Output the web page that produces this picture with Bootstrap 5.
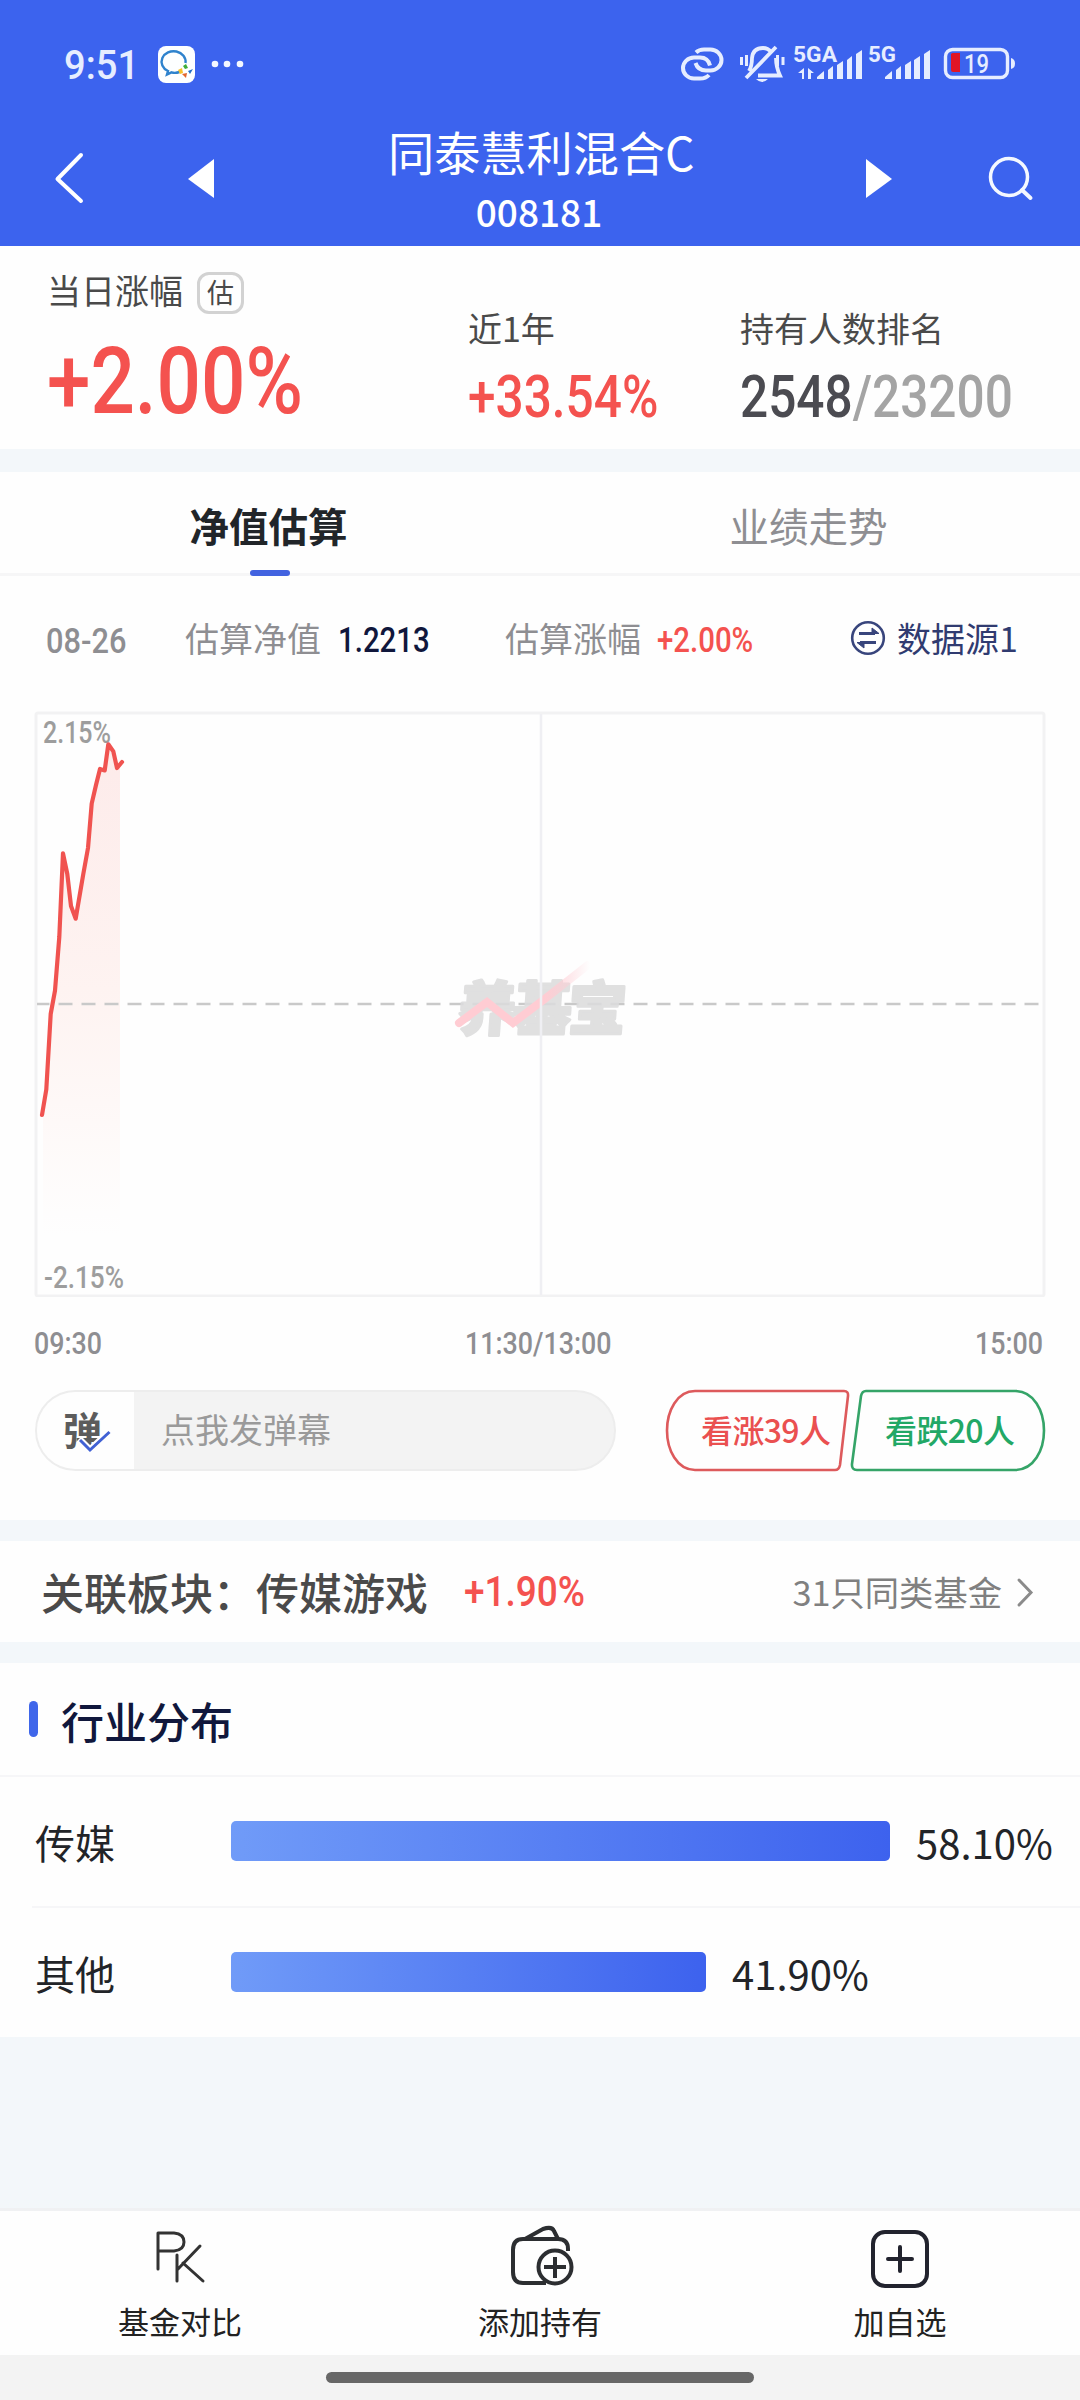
<!DOCTYPE html>
<html lang="zh-CN">
<head>
<meta charset="utf-8">
<meta name="viewport" content="width=device-width, initial-scale=1">
<title>同泰慧利混合C 008181</title>
<link href="https://cdn.jsdelivr.net/npm/bootstrap@5.3.0/dist/css/bootstrap.min.css" rel="stylesheet">
<style>
  body{width:1080px;height:2400px;overflow:hidden;background:#f3f7fa;font-family:"Noto Sans CJK SC",sans-serif;font-size:34px;line-height:50px;color:#4a4a4a;white-space:nowrap}
  svg{display:block;flex:none}
  .panel{background:#fefefe}
  .num{display:inline-block;font-family:Roboto,"Noto Sans CJK SC",sans-serif;font-weight:500;transform:scaleX(.84);transform-origin:0 50%;text-align:left}
  .up{color:#f4524f}
  .muted{color:#8e8e92}
  .app-head{height:246px;background:#3c63ee;color:#fff}
  .status{height:96px;padding:30px 0 0 64px}
  .clock{width:94px;font-size:41px;line-height:62px;color:#e6edff}
  .clock .num{transform:scaleX(.93)}
  .head-bar{height:150px;padding-left:52px}
  .fund-title{font-size:46.2px;line-height:56px;padding-top:27px}
  .fund-code{font-size:37px;line-height:37px;font-weight:500;padding-top:14px}
  .summary{height:203px}
  .sum-day{width:468px;padding:19px 0 0 47px}
  .sum-year{width:273px;padding-top:57px}
  .sum-rank{padding-top:57px;margin-left:-1px}
  .tag-est{width:47px;height:42px;border:3px solid #d2d2d2;border-radius:12px;font-size:27px;line-height:33px;margin:7px 0 0 14px}
  .num-xl{font-size:92px;line-height:100px;margin-top:17px;transform:scaleX(.85)}
  .num-lg{font-size:59px;line-height:64px;margin-top:12px}
  .tabs{height:104px;margin-top:23px;border-bottom:3px solid #f6f6f7;font-size:39.5px}
  .tab-item{width:540px;padding-top:26px;line-height:54px}
  .tab-item span{margin-left:-3px}
  .tab-item i{flex:none;width:40px;height:6px;border-radius:3px;background:#4263e0;margin-top:18px}
  .dark{color:#10173c}
  .info{height:135px;padding:37px 0 0 46px}
  .info .num{font-size:35px}
  .axis{height:93px;padding-top:16px;font-size:31px;line-height:56px}
  .axis .num{transform:scaleX(.865)}
  .danmu{width:581px;height:81px;border-radius:41px;border:2px solid #ededed;background:#f3f3f3;overflow:hidden;color:#9a9a9a}
  .danmu-sw{width:97px;height:77px;background:#fefefe;padding-left:27px}
  .vote text{font-family:"Noto Sans CJK SC",sans-serif;font-size:32px;font-weight:500}
  .related{height:101px;margin-top:21px;padding:22px 0 0 41px;font-size:43px;font-weight:500;line-height:56px}
  .dist{height:374px;margin-top:21px}
  .dist-head{height:114px;padding:30px 0 0 29px;border-bottom:2px solid #f6f6f8;font-size:43px;font-weight:500;line-height:54px}
  .dist-head i{width:9px;height:36px;border-radius:5px;background:#3f66ea;margin:8px 23px 0 0}
  .dist-row{height:130px;padding-left:35px;font-size:40px;color:#222428}
  .dist-row .name{flex:none;width:196px;line-height:56px;padding-top:37px}
  .dist-row .pct{line-height:56px;padding-top:37px}
  .bar{flex:none;height:40px;border-radius:5px;background:linear-gradient(90deg,#709bf8,#3d62ee);margin:44px 26px 0 0}
  .foot{height:147px;margin-top:171px;border-top:3px solid #f0f1f3}
  .foot .col{font-size:31px;line-height:44px;color:#222}
  .foot svg{margin:11px auto 1px}
  .home{height:45px;background:#f3f3f3;padding-top:17px}
  .home i{width:428px;height:11px;border-radius:6px;background:#676767}
</style>
<script src="https://cdn.jsdelivr.net/npm/bootstrap@5.3.0/dist/js/bootstrap.bundle.min.js"></script>
</head>
<body>
<header class="app-head">
  <div class="status d-flex">
    <span class="clock"><span class="num">9:51</span></span>
    <svg width="90" height="66" viewBox="158 30 90 66">
      <rect x="158" y="46" width="37" height="37" rx="8" fill="#fdffff"/>
      <path d="M185.500 63A12 10.500 0 1 0 168 71L167 74.500L171.500 72.300Q175 73.500 179.500 72" fill="none" stroke="#2e83cd" stroke-width="2.400"/>
      <path d="M183 66l3-2 2 4-3 1z" fill="#3fae3a"/><path d="M188 71l5-2-3 5z" fill="#246fc6"/><path d="M182 74l5-1-1 5z" fill="#e3662c"/><path d="M178 70l4-2 1 5-3 1z" fill="#f5c22d"/>
      <g fill="#f4f8ff"><circle cx="215" cy="64" r="3.300"/><circle cx="227" cy="64" r="3.300"/><circle cx="240" cy="64" r="3.300"/></g>
    </svg>
    <svg class="ms-auto" width="402" height="66" viewBox="678 30 402 66" fill="none" stroke="#e6edff" stroke-width="4">
      <path d="M696 52.500Q699 49.500 704 49.500H710.500A11 10.500 0 0 1 710.500 70.500H706Q698 70.500 695.500 63M710 65.500Q708 57.500 700 57.500H694A11 10.500 0 0 0 694 78.500H700Q706 78.500 709 75"/>
      <path d="M749 71q3-5 3-13 1-10 11-10 5 0 8 4M776 58q0 9 4 17.500H758M746 78L776 47" stroke-width="3.800"/>
      <path d="M741.500 57v8M746.500 55v11M777.500 55v11M783 57v8" stroke-width="3"/>
      <path d="M756 79h12q-6 6-12 0z" fill="#e6edff" stroke="none"/>
      <g fill="#e6edff" stroke="none" font-family="Roboto,sans-serif" font-weight="700" font-size="22.500">
        <text x="793" y="61.500" textLength="44" lengthAdjust="spacingAndGlyphs">5GA</text>
        <text x="868" y="61.500" textLength="28" lengthAdjust="spacingAndGlyphs">5G</text>
        <path d="M798 73l6-5v11h-2v-6zM808 68l6 5h-3v6h-3z"/>
        <path d="M817 79v-2l7-6v8zM828 79v-9l5-4v13zM837 79v-14l6-4v18zM847 79v-19l5-4v23zM856 79v-25l6-4v29z"/>
        <path d="M885 79v-2l7-6v8zM896 79v-9l5-4v13zM905 79v-14l6-4v18zM914 79v-19l6-4v23zM924 79v-25l6-4v29z"/>
        <path d="M1011 58q4 1 4 5.500t-4 5.500z"/>
        <text x="964" y="73" font-size="26" font-weight="500" textLength="25" lengthAdjust="spacingAndGlyphs">19</text>
      </g>
      <rect x="945.500" y="49.500" width="62" height="28" rx="7" stroke-width="3.400"/>
      <path d="M951 54q1-1 2-1h7v19h-7q-2 0-2-2z" fill="#e01525" stroke="none"/>
    </svg>
  </div>
  <div class="head-bar d-flex">
    <svg width="336" height="150" viewBox="52 96 336 150"><path d="M81 155L57.500 179 81 201" fill="none" stroke="#fff" stroke-width="4" stroke-linecap="round" stroke-linejoin="round"/><path d="M188 179L214 159V198z" fill="#fff"/></svg>
    <div class="text-center" style="width:302px">
      <div class="fund-title">同泰慧利混合C</div>
      <div class="fund-code">008181</div>
    </div>
    <svg width="390" height="150" viewBox="690 96 390 150"><path d="M892 179L866 159V198z" fill="#fff"/><circle cx="1009" cy="177" r="18.500" fill="none" stroke="#f4f8ff" stroke-width="3.500"/><path d="M1022 190L1030.500 198" stroke="#f4f8ff" stroke-width="4" stroke-linecap="round"/></svg>
  </div>
</header>

<section class="summary panel d-flex">
  <div class="sum-day">
    <div class="d-flex">当日涨幅<span class="tag-est text-center">估</span></div>
    <div class="num num-xl up">+2.00%</div>
  </div>
  <div class="sum-year">
    <div>近1年</div>
    <div class="num num-lg up">+33.54%</div>
  </div>
  <div class="sum-rank">
    <div>持有人数排名</div>
    <div class="num num-lg"><span style="color:#4b4b51">2548</span><span style="color:#a4a4a4">/23200</span></div>
  </div>
</section>

<nav class="tabs panel d-flex">
  <div class="tab-item d-flex flex-column align-items-center text-body fw-bold"><span>净值估算</span><i></i></div>
  <div class="tab-item text-center muted"><span>业绩走势</span></div>
</nav>

<section class="panel" style="height:944px">
  <div class="info d-flex">
    <div style="width:139px;padding-top:1px"><span class="num muted" style="transform:scaleX(.88)">08-26</span></div>
    <div class="muted" style="width:153px">估算净值</div>
    <div style="width:167px"><span class="num dark">1.2213</span></div>
    <div class="muted" style="width:152px">估算涨幅</div>
    <div style="width:193px"><span class="num up">+2.00%</span></div>
    <svg width="47" height="50" viewBox="850 613 47 50" fill="none" stroke="#38457c" stroke-width="2.600"><circle cx="868" cy="638" r="15.800"/><path d="M859 633.500h16M860 642.500h16" stroke-width="3"/><path d="M872 628l7 5.500h-7zM864 648l-7-5.500h7z" fill="#38457c" stroke-width="1"/></svg>
    <div style="color:#303b70">数据源1</div>
  </div>

  <svg class="mx-auto" width="1012" height="586" viewBox="34 711 1012 586">
    <defs>
      <linearGradient id="area" x1="0" y1="744" x2="0" y2="1235" gradientUnits="userSpaceOnUse"><stop offset="0" stop-color="#fdebea"/><stop offset=".5" stop-color="#fef3f1"/><stop offset="1" stop-color="#fefefe"/></linearGradient>
      <linearGradient id="tick" x1="458" y1="0" x2="590" y2="0" gradientUnits="userSpaceOnUse"><stop offset=".65" stop-color="#ffccd3"/><stop offset="1" stop-color="#ffccd3" stop-opacity="0"/></linearGradient>
    </defs>
    <path d="M43 1115L46.300 1089.500 50.700 1014 55 990.600 59.300 937 63 853.400 67.300 874 71 906 75.700 918.700 83.300 874 88 848 91.700 803.600 96 785 100 769 104.700 770.400 108.300 744.300 113.300 751.400 117 768 120 764V1235H43z" fill="url(#area)"/>
    <rect x="36" y="713" width="1008" height="583" rx="2" fill="none" stroke="#f2f2f3" stroke-width="3"/>
    <path d="M37 1004H1043" stroke="#c9c9c9" stroke-width="2.500" stroke-dasharray="14 9" stroke-dashoffset="1.500"/>
    <text transform="translate(457 1030) skewX(-4)" font-family="Noto Sans CJK SC,sans-serif" font-weight="900" font-size="58" textLength="168" fill="#dcdcdd" stroke="#dcdcdd" stroke-width="3" stroke-linejoin="round" opacity=".88">养基宝</text>
    <path d="M459 1023L487 1002 513 1023 546 998 588 965" fill="none" stroke="url(#tick)" stroke-width="8" stroke-linecap="round"/>
    <path d="M541 714V1295" stroke="#efeff3" stroke-width="2.500"/>
    <g font-family="Roboto,sans-serif" font-weight="500" font-size="31" fill="#9d9d9d">
      <text x="43" y="743" textLength="68" lengthAdjust="spacingAndGlyphs">2.15%</text>
      <text x="44" y="1288" textLength="80" lengthAdjust="spacingAndGlyphs">-2.15%</text>
    </g>
    <path d="M42 1115L46.300 1089.500 50.700 1014 55 990.600 59.300 937 63 853.400 67.300 874 71 906 75.700 918.700 83.300 874 88 848 91.700 803.600 96 785 100 769 104.700 770.400 108.300 744.300 113.300 751.400 117 768 122 762" fill="none" stroke="#f05350" stroke-width="4.200" stroke-linecap="round" stroke-linejoin="round"/>
  </svg>

  <div class="axis muted d-flex">
    <div style="width:465px;padding-left:34px"><span class="num">09:30</span></div>
    <div style="width:510px"><span class="num">11:30/13:00</span></div>
    <div><span class="num">15:00</span></div>
  </div>

  <div class="d-flex">
    <div class="danmu d-flex align-items-center" style="margin-left:35px">
      <div class="danmu-sw">
        <svg width="50" height="77" viewBox="65 1392 50 77"><text x="64" y="1445" font-family="Noto Sans CJK SC,sans-serif" font-weight="700" font-size="39" fill="#5c5c5c">弹</text><path d="M80 1439L91 1450 111 1431" fill="none" stroke="#fefefe" stroke-width="7"/><path d="M81 1440L91 1450 110.500 1432" fill="none" stroke="#4161d4" stroke-width="3"/></svg>
      </div>
      <span style="padding-left:27px;margin-top:-3px">点我发弹幕</span>
    </div>
    <svg class="vote" width="382" height="84" viewBox="665 1389 382 84" style="margin:-1px 0 0 49px" fill="none" stroke-width="2.600">
      <path d="M695 1391H844Q848.500 1391 848 1396L840 1465Q839 1470 835 1470H695C677 1470 667 1450 667 1430.500S677 1391 695 1391z" stroke="#dd5a5c"/>
      <path d="M866 1391H1015C1034 1391 1044 1411 1044 1430.500S1034 1470 1015 1470H857Q851.500 1470 852 1464L861 1396Q862 1391 866 1391z" stroke="#35a468"/>
      <text x="701" y="1443" textLength="130" fill="#ea5050">看涨39人</text>
      <text x="885" y="1443" textLength="130" fill="#22a866">看跌20人</text>
    </svg>
  </div>
</section>

<section class="related panel d-flex">
  <span>关联板块：传媒游戏</span>
  <span class="num up" style="font-size:43px;margin-left:36px;width:140px;transform:scaleX(.86)">+1.90%</span>
  <span class="ms-auto" style="font-size:34.300px;font-weight:400;color:#808080">31只同类基金</span>
  <svg width="78" height="56" viewBox="1002 1563 78 56"><path d="M1019 1580L1031 1592.500 1019 1605" fill="none" stroke="#8b8b8b" stroke-width="3" stroke-linecap="round"/></svg>
</section>

<section class="dist panel">
  <div class="dist-head d-flex dark"><i></i>行业分布</div>
  <div class="dist-row d-flex"><div class="name">传媒</div><div class="bar" style="width:659px"></div><div class="pct">58.10%</div></div>
  <div style="height:2px;margin:-1px 0 -1px 32px;background:#f6f6f8"></div>
  <div class="dist-row d-flex" style="padding-top:1px"><div class="name">其他</div><div class="bar" style="width:475px"></div><div class="pct">41.90%</div></div>
</section>

<footer>
  <div class="foot panel d-flex">
    <div class="col text-center">
      <svg width="76" height="76" viewBox="142 2223 76 76" fill="none" stroke="#333" stroke-width="3" stroke-linecap="round" stroke-linejoin="round"><path d="M158 2270V2234H174Q184 2235 184 2243T174 2252H158M177 2256V2282M200 2247L178 2270M183 2264L203 2282"/></svg>
      基金对比
    </div>
    <div class="col text-center">
      <svg width="76" height="76" viewBox="502 2223 76 76" fill="none" stroke="#2c2e31" stroke-width="4" stroke-linejoin="round"><path d="M568 2252V2250Q568 2240 558 2240H523Q513 2240 513 2251V2273Q513 2284 523 2284H546"/><path d="M525 2240L543 2230Q552 2227 554 2232L558 2240"/><circle cx="555" cy="2268" r="16.500" fill="#fefefe"/><path d="M544 2268H566M555 2258V2279"/></svg>
      添加持有
    </div>
    <div class="col text-center">
      <svg width="76" height="76" viewBox="862 2223 76 76" fill="none" stroke="#22232e" stroke-width="4" stroke-linecap="round"><rect x="873" y="2233" width="54" height="54" rx="12"/><path d="M888 2260H912M900 2248V2272"/></svg>
      加自选
    </div>
  </div>
  <div class="home d-flex justify-content-center"><i></i></div>
</footer>
</body>
</html>
